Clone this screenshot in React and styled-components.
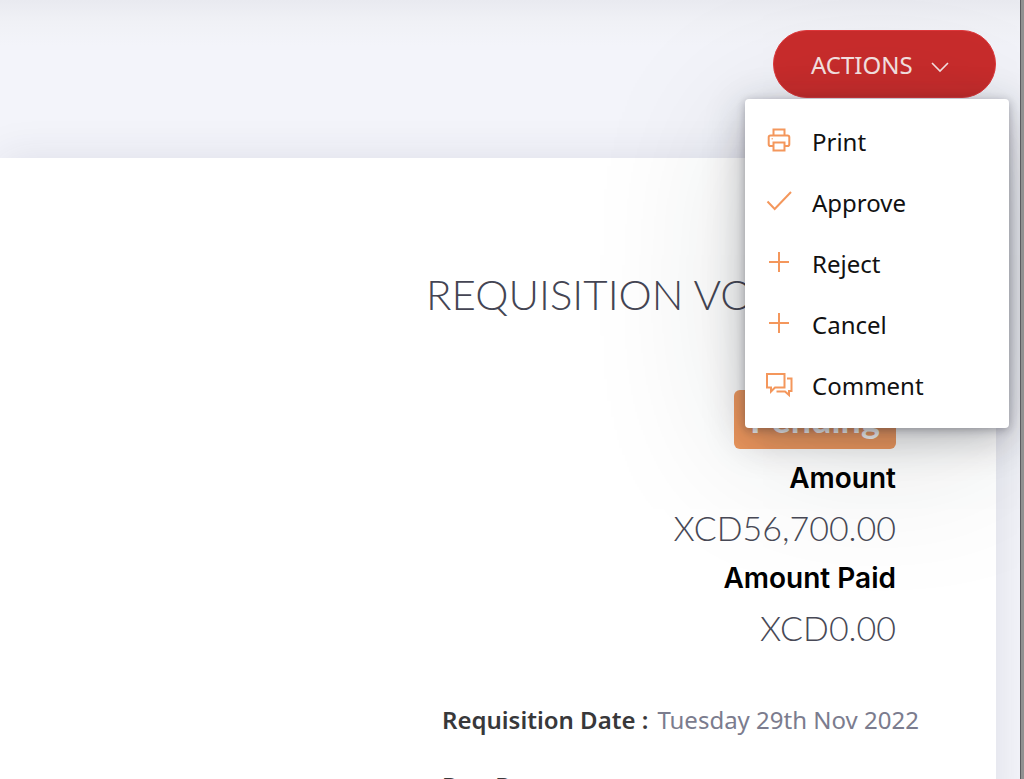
import React from "react";
import styled, { createGlobalStyle } from "styled-components";

const GlobalStyle = createGlobalStyle`
  *, *::before, *::after { box-sizing: border-box; }
  html, body { margin: 0; height: 100%; }
  body {
    overflow: hidden;
    background: #f3f4f9;
    font-family: "Noto Sans", "Open Sans", sans-serif;
    color: #000;
  }
`;

const Frame = styled.div`
  border-right: 3px solid #919191;
`;

const Page = styled.div`
  height: 100vh;
  overflow: hidden;
  border-right: 1px solid #5c5c60;
`;

const Header = styled.header`
  display: flex;
  justify-content: flex-end;
  align-items: flex-start;
  height: 158px;
  padding: 30px 24px 0;
  background: linear-gradient(#e9eaf0, #f0f1f6 22px, #f3f4fa 46px);
`;

const Dropdown = styled.div`
  position: relative;
`;

const ActionsButton = styled.button`
  display: flex;
  align-items: center;
  gap: 18px;
  width: 223px;
  height: 68px;
  padding: 2px 37px 0;
  border: 1px solid #e0393c;
  border-radius: 34px;
  background: #ca2c2c;
  color: #f8e4e4;
  font: 400 24px/36px "Noto Sans", "Open Sans", sans-serif;
  cursor: pointer;
`;

const Menu = styled.ul`
  position: absolute;
  z-index: 2;
  top: 69px;
  right: -13px;
  width: 264px;
  margin: 0;
  padding: 12px 0;
  list-style: none;
  border-radius: 4px;
  background: #fff;
  box-shadow:
    0 20px 160px rgba(30, 40, 40, 0.14),
    0 10px 40px rgba(30, 30, 40, 0.3),
    0 2px 8px rgba(30, 30, 50, 0.3);
`;

const MenuItem = styled.button`
  display: flex;
  align-items: center;
  gap: 19px;
  width: 100%;
  height: 61px;
  padding: 0 20px;
  border: 0;
  background: transparent;
  color: #111;
  font: 400 24px/36px "Noto Sans", "Open Sans", sans-serif;
  text-align: left;
  cursor: pointer;
`;

const Icon = styled.svg`
  flex: none;
  width: 28px;
  height: 28px;
  margin-bottom: 4px;
  fill: none;
  stroke: #f4975c;
  stroke-width: 2;
`;

const Chevron = styled.svg`
  flex: none;
  width: 18px;
  height: 12px;
  margin-top: 4px;
  fill: none;
  stroke: #f8e4e4;
  stroke-width: 1.6;
`;

const Voucher = styled.main`
  display: grid;
  grid-template-columns: minmax(0, 1fr) 570px;
  margin-right: 24px;
  min-height: 640px;
  background: #fff;
  box-shadow: 0 0 40px rgba(40, 40, 80, 0.1);
`;

const Content = styled.div`
  grid-column: 2;
  padding: 108px 100px 0 0;
`;

const Title = styled.h1`
  margin: 0;
  color: #444553;
  font: 300 42px/56px Lato, sans-serif;
  white-space: nowrap;
`;

const Summary = styled.section`
  display: flex;
  flex-direction: column;
  align-items: flex-end;
  margin-top: 68px;
`;

const Status = styled.span`
  width: 162px;
  height: 59px;
  margin-bottom: 5px;
  border-radius: 6px;
  background: #f1995e;
  color: #fff;
  font: 700 36px/58px Lato, sans-serif;
  text-align: center;
`;

const Label = styled.h2`
  margin: 0;
  font: 600 28px/48px Inter, sans-serif;
`;

const Amount = styled.p`
  margin: 0;
  color: #484956;
  font: 300 34px/52px Lato, sans-serif;
`;

const Details = styled.dl`
  margin: 33px 0 0;
  padding-left: 16px;
`;

const Detail = styled.div`
  display: flex;
  gap: 9px;
  height: 66px;
  font-size: 24px;
  line-height: 66px;
  white-space: nowrap;
`;

const Term = styled.dt`
  color: #38383a;
  font-weight: 600;
`;

const Value = styled.dd`
  margin: 0;
  color: #7b7c8e;
`;

const icons = {
  print: (
    <>
      <path d="M8.500 9.500V3.500h11v6" />
      <path d="M8.500 20h-3q-1.800 0-1.800-1.800v-6.900q0-1.800 1.800-1.800h17q1.800 0 1.800 1.800v6.900q0 1.800-1.800 1.800h-3" />
      <path d="M8.500 16.500h11v8h-11z" />
      <path d="M6.500 12.800h1.500" strokeWidth="1" />
    </>
  ),
  check: <path d="M2.500 14.500l7.200 7.500L26 5" />,
  plus: <path d="M14 4v20M4 14h20" />,
  comment: (
    <>
      <path d="M2 4h17.500v13.500H10l-4 4v-4H2z" />
      <path d="M22 8.500h4.500v12.500h-2.500v4l-4-3.500h-8.500" />
    </>
  ),
};

const actions = [
  { label: "Print", icon: "print" },
  { label: "Approve", icon: "check" },
  { label: "Reject", icon: "plus" },
  { label: "Cancel", icon: "plus" },
  { label: "Comment", icon: "comment" },
];

export default function App() {
  return (
    <Frame>
      <GlobalStyle />
      <Page>
        <Header>
          <Dropdown>
            <ActionsButton type="button" aria-haspopup="menu" aria-expanded="true">
              ACTIONS
              <Chevron viewBox="0 0 18 12" aria-hidden="true">
                <path d="M1 2l8 8 8-8" />
              </Chevron>
            </ActionsButton>
            <Menu>
              {actions.map(({ label, icon }) => (
                <li key={label}>
                  <MenuItem type="button">
                    <Icon viewBox="0 0 28 28" aria-hidden="true">
                      {icons[icon]}
                    </Icon>
                    {label}
                  </MenuItem>
                </li>
              ))}
            </Menu>
          </Dropdown>
        </Header>
        <Voucher>
          <Content>
            <Title>REQUISITION VOUCHER</Title>
            <Summary>
              <Status>Pending</Status>
              <Label>Amount</Label>
              <Amount>XCD56,700.00</Amount>
              <Label>Amount Paid</Label>
              <Amount>XCD0.00</Amount>
            </Summary>
            <Details>
              <Detail>
                <Term>Requisition Date :</Term>
                <Value>Tuesday 29th Nov 2022</Value>
              </Detail>
              <Detail>
                <Term>Due Date :</Term>
              </Detail>
            </Details>
          </Content>
        </Voucher>
      </Page>
    </Frame>
  );
}
